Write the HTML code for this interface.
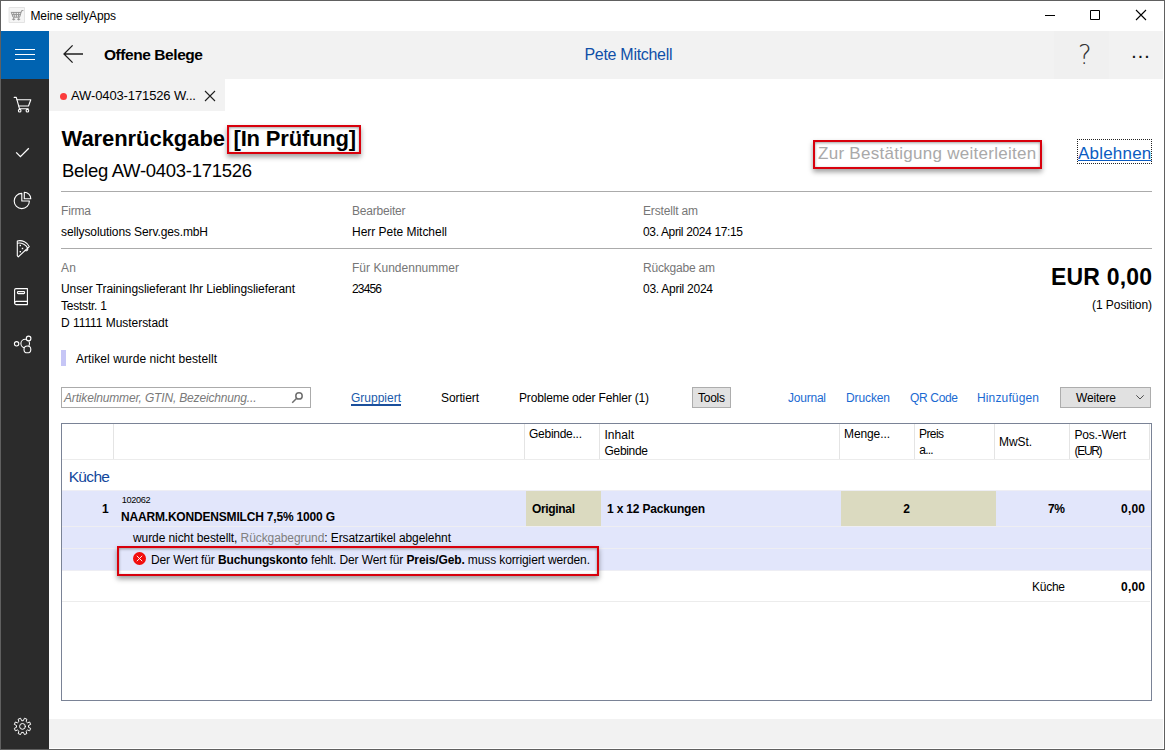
<!DOCTYPE html>
<html lang="de">
<head>
<meta charset="utf-8">
<title>Meine sellyApps</title>
<style>
html,body{margin:0;padding:0;}
body{width:1165px;height:750px;overflow:hidden;background:#fff;position:relative;font-family:"Liberation Sans",sans-serif;color:#000;}
.a{position:absolute;}
.t{position:absolute;white-space:nowrap;}
.ln{position:absolute;height:1px;background:#ababab;left:61px;width:1091px;}
.rb{position:absolute;border:2px solid #d8000c;box-shadow:0 3px 5px rgba(0,0,0,.38), inset 0 1px 3px rgba(0,0,0,.38);box-sizing:border-box;z-index:20;}
svg{position:absolute;overflow:visible;}
</style>
</head>
<body>
<!-- window frame -->
<div class="a" style="left:0;top:0;width:1165px;height:750px;box-sizing:border-box;border:1px solid #606060;z-index:50;pointer-events:none;"></div>

<!-- header bar -->
<div class="a" style="left:49px;top:31px;width:1114px;height:48px;background:#f2f2f2;"></div>
<div class="a" style="left:1054px;top:31px;width:55px;height:48px;background:#f0f0f0;"></div>
<!-- hamburger -->
<div class="a" style="left:1px;top:31px;width:48px;height:48px;background:#0063b1;"></div>
<div class="a" style="left:15px;top:49px;width:20px;height:1px;background:#fff;"></div>
<div class="a" style="left:15px;top:54px;width:20px;height:1px;background:#fff;"></div>
<div class="a" style="left:15px;top:59px;width:20px;height:1px;background:#fff;"></div>
<!-- sidebar -->
<div class="a" style="left:1px;top:79px;width:48px;height:670px;background:#2b2b2b;"></div>
<!-- tab -->
<div class="a" style="left:49px;top:79px;width:176px;height:32px;background:#f2f2f2;"></div>
<div class="a" style="left:60px;top:92.5px;width:7px;height:7px;border-radius:3.5px;background:#fb3b3b;"></div>
<!-- bottom bar -->
<div class="a" style="left:49px;top:719px;width:1114px;height:29px;background:#f2f2f2;"></div>

<!-- separator lines -->
<div class="ln" style="top:191px;"></div>
<div class="ln" style="top:248px;"></div>

<!-- red highlight boxes -->
<div class="rb" style="left:227px;top:125px;width:134px;height:29px;"></div>
<div class="rb" style="left:813px;top:140px;width:229px;height:29px;"></div>

<!-- dotted focus -->
<div class="a" style="left:1077px;top:139px;width:75px;height:25px;box-sizing:border-box;border:1px dotted #222;"></div>

<!-- lavender marker -->
<div class="a" style="left:61px;top:350px;width:5px;height:16px;background:#c6c6f6;"></div>

<!-- search box -->
<div class="a" style="left:61px;top:387px;width:250px;height:21px;box-sizing:border-box;border:1px solid #ababab;background:#fff;"></div>
<!-- gruppiert underline -->
<div class="a" style="left:351px;top:404px;width:50px;height:2px;background:#1b4f9c;"></div>
<!-- tools button -->
<div class="a" style="left:692px;top:387px;width:39px;height:21px;box-sizing:border-box;border:1px solid #adadad;background:#e1e1e1;"></div>
<!-- weitere button -->
<div class="a" style="left:1060px;top:387px;width:91px;height:21px;box-sizing:border-box;border:1px solid #adadad;background:#e1e1e1;"></div>

<!-- table -->
<div class="a" style="left:61px;top:423px;width:1091px;height:278px;box-sizing:border-box;border:1px solid #7a8396;background:#fff;"></div>
<!-- header bottom line -->
<div class="a" style="left:62px;top:459px;width:1088px;height:1px;background:#ececec;"></div>
<!-- header col separators -->
<div class="a" style="left:113px;top:424px;width:1px;height:35px;background:#e4e4e4;"></div>
<div class="a" style="left:524px;top:424px;width:1px;height:35px;background:#e4e4e4;"></div>
<div class="a" style="left:599px;top:424px;width:1px;height:35px;background:#e4e4e4;"></div>
<div class="a" style="left:839px;top:424px;width:1px;height:35px;background:#e4e4e4;"></div>
<div class="a" style="left:914px;top:424px;width:1px;height:35px;background:#e4e4e4;"></div>
<div class="a" style="left:994px;top:424px;width:1px;height:35px;background:#e4e4e4;"></div>
<div class="a" style="left:1069px;top:424px;width:1px;height:35px;background:#e4e4e4;"></div>
<div class="a" style="left:1149px;top:424px;width:1px;height:35px;background:#e4e4e4;"></div>
<!-- rows -->
<div class="a" style="left:62px;top:490px;width:1089px;height:80px;background:#e2e6fb;"></div>
<div class="a" style="left:62px;top:526px;width:1089px;height:1px;background:#eeeef2;"></div>
<div class="a" style="left:62px;top:548px;width:1089px;height:1px;background:#eeeef2;"></div>
<div class="a" style="left:62px;top:490px;width:1089px;height:1px;background:#eeeef4;"></div>
<div class="a" style="left:62px;top:570px;width:1089px;height:1px;background:#eeeef4;"></div>
<div class="a" style="left:526px;top:491px;width:75px;height:35px;background:#dbdac0;"></div>
<div class="a" style="left:841px;top:491px;width:155px;height:35px;background:#dbdac0;"></div>
<div class="a" style="left:62px;top:601px;width:1088px;height:1px;background:#ececec;"></div>

<!-- red box 3 -->
<div class="rb" style="left:117px;top:546px;width:482px;height:30px;"></div>


<svg width="1165" height="750" viewBox="0 0 1165 750" style="left:0;top:0;" fill="none" stroke-linecap="round" stroke-linejoin="round">
<!-- title icon -->
<rect x="9.5" y="7.5" width="15" height="15" fill="#f5f5f5" stroke="#e3e3e3" stroke-width="1"/>
<g stroke="#939393" stroke-width="1">
<path d="M11.3,12.3 L13,17.2 H19.6 L21.6,10.6 H23"/>
<path d="M13.6,12.5 L14.4,16.5 M16.2,12.5 L16.4,16.5 M18.8,12.5 L18.4,16.5 M11.8,12.4 H20.6 M12.4,14.6 H20"/>
<path d="M12.6,19.3 H14.8 M17.6,19.3 H19.8 M13.7,18 V20 M18.7,18 V20"/>
</g>
<!-- window controls -->
<g stroke="#000" stroke-width="1" stroke-linecap="butt">
<path d="M1045,15.5 H1055"/>
<rect x="1090.5" y="10.5" width="9" height="9"/>
<path d="M1136,10 L1146,20 M1146,10 L1136,20" stroke-width="1.1"/>
</g>
<!-- back arrow -->
<path d="M83,54 H64.2 M72.6,45.4 L64,54 L72.6,62.6" stroke="#1f1f1f" stroke-width="1.3" stroke-linecap="butt" stroke-linejoin="miter"/>
<!-- tab close -->
<path d="M205,91 L215,101 M215,91 L205,101" stroke="#1f1f1f" stroke-width="1.1" stroke-linecap="butt"/>
<!-- sidebar: cart -->
<g stroke="#fff" stroke-width="1.1">
<path d="M14.2,97.4 H16.3 L19.5,108.8 H28.2"/>
<path d="M16.9,99.7 H30.8 L28.5,106 H18.8"/>
<circle cx="19.7" cy="110.7" r="1.3"/><circle cx="27.4" cy="110.7" r="1.3"/>
<!-- check -->
<path d="M16.2,152.4 L20.4,156.6 L28.8,148.2" stroke-width="1.3" stroke-linecap="butt" stroke-linejoin="miter"/>
<!-- pie -->
<path d="M21.8,193.4 A7.6,7.6 0 1 0 29.4,201 H21.8 Z"/>
<path d="M24.3,192.3 A6.5,6.5 0 0 1 30.8,198.8 H24.3 Z"/>
<!-- pizza -->
<path d="M17.3,241 C22,239.6 27.6,242.4 29.3,246.6 L18.3,256.8 L17.3,255.6 Z"/>
<path d="M17.5,243.2 C21.5,242.4 25.8,244.6 27.6,248"/>
<path d="M25.2,250.4 A1.6,1.6 0 0 0 27.6,248.4"/>
<!-- book -->
<path d="M27.4,288.6 H16 A1.4,1.4 0 0 0 14.6,290 V303 A1.6,1.6 0 0 0 16.2,304.6 H27.4 Z"/>
<path d="M14.6,303 A1.6,1.6 0 0 1 16.2,301.4 H27.4"/>
<rect x="17.4" y="291.6" width="7.2" height="2" rx="0.8"/>
<!-- molecule -->
<circle cx="25.2" cy="343.6" r="4.3"/>
<circle cx="16.6" cy="343.8" r="2.2"/>
<circle cx="28.6" cy="338.4" r="2.3" fill="#2b2b2b"/>
<circle cx="27.4" cy="349.4" r="3.4" fill="#2b2b2b"/>
<!-- gear -->
<path d="M23.45,720.38 L24.46,718.23 L26.89,719.24 L26.09,721.46 L27.44,722.81 L29.66,722.01 L30.67,724.44 L28.52,725.45 L28.52,727.35 L30.67,728.36 L29.66,730.79 L27.44,729.99 L26.09,731.34 L26.89,733.56 L24.46,734.57 L23.45,732.42 L21.55,732.42 L20.54,734.57 L18.11,733.56 L18.91,731.34 L17.56,729.99 L15.34,730.79 L14.33,728.36 L16.48,727.35 L16.48,725.45 L14.33,724.44 L15.34,722.01 L17.56,722.81 L18.91,721.46 L18.11,719.24 L20.54,718.23 L21.55,720.38Z" stroke-width="1"/>
<circle cx="22.5" cy="726.4" r="2.9" stroke-width="1"/>
</g>
<g fill="#fff" stroke="none"><rect x="19.6" y="244.8" width="1.4" height="1.4"/><rect x="21.8" y="247.8" width="1.4" height="1.4"/><rect x="19.6" y="251" width="1.4" height="1.4"/></g>
<!-- search icon -->
<g stroke="#6e6e6e" stroke-width="1.5" stroke-linecap="butt"><circle cx="299" cy="395.9" r="3.2"/><path d="M296.7,398.3 L292.2,402.7"/></g>
<!-- chevron weitere -->
<path d="M1136.3,395.3 L1140,399 L1143.7,395.3" stroke="#505050" stroke-width="1" stroke-linecap="butt" stroke-linejoin="miter"/>
<!-- error icon -->
<circle cx="139.5" cy="558.5" r="6.5" fill="#f20d0d"/>
<path d="M136.8,555.8 L142.2,561.2 M142.2,555.8 L136.8,561.2" stroke="#fff" stroke-width="0.9" stroke-linecap="butt"/>
</svg>

<span class="t" id="help" style="left:1077.6px;top:39px;font-family:'DejaVu Sans Light','DejaVu Sans',sans-serif;font-weight:200;font-size:27px;line-height:32px;color:#333;transform:scaleX(.95);transform-origin:left top;">?</span>
<span class="t" id="more" style="left:1132px;top:43px;font-size:14px;line-height:20px;color:#111;letter-spacing:2.6px;font-weight:700;">...</span>
<span class="t" id="tt" style="font-size:12px;line-height:16px;top:7.84px;left:30.5px;letter-spacing:-0.134px;">Meine sellyApps</span>
<span class="t" id="ob" style="font-size:15.5px;line-height:20px;top:44.63px;left:104px;font-weight:700;letter-spacing:-0.436px;">Offene Belege</span>
<span class="t" id="pm" style="font-size:16px;line-height:21px;top:43.96px;left:584.5px;color:#0f4fa8;letter-spacing:-0.299px;">Pete Mitchell</span>
<span class="t" id="tab" style="font-size:13px;line-height:17px;top:87.00px;left:71px;letter-spacing:-0.122px;">AW-0403-171526 W...</span>
<span class="t" id="h1" style="font-size:22px;line-height:29px;top:123.88px;left:61.5px;font-weight:700;letter-spacing:-0.062px;">Warenrückgabe</span>
<span class="t" id="h1b" style="font-size:22px;line-height:29px;top:123.88px;left:233.5px;font-weight:700;letter-spacing:-0.176px;">[In Prüfung]</span>
<span class="t" id="h2" style="font-size:18.5px;line-height:24px;top:159.29px;left:62px;letter-spacing:-0.286px;">Beleg AW-0403-171526</span>
<span class="t" id="zb" style="font-size:17px;line-height:22px;top:143.41px;left:818px;color:#a9a9a9;letter-spacing:0.280px;">Zur Bestätigung weiterleiten</span>
<span class="t" id="ab" style="font-size:17px;line-height:22px;top:143.41px;left:1078px;color:#0a5cc2;letter-spacing:0.208px;text-decoration:underline;text-decoration-thickness:1px;text-underline-offset:1px;">Ablehnen</span>
<span class="t" id="l1" style="font-size:12px;line-height:16px;top:202.84px;left:61px;color:#767676;letter-spacing:-0.168px;">Firma</span>
<span class="t" id="l2" style="font-size:12px;line-height:16px;top:202.84px;left:352px;color:#767676;letter-spacing:-0.208px;">Bearbeiter</span>
<span class="t" id="l3" style="font-size:12px;line-height:16px;top:202.84px;left:643px;color:#767676;letter-spacing:-0.169px;">Erstellt am</span>
<span class="t" id="v1" style="font-size:12px;line-height:16px;top:223.84px;left:61px;letter-spacing:-0.109px;">sellysolutions Serv.ges.mbH</span>
<span class="t" id="v2" style="font-size:12px;line-height:16px;top:223.84px;left:352px;letter-spacing:-0.022px;">Herr Pete Mitchell</span>
<span class="t" id="v3" style="font-size:12px;line-height:16px;top:223.84px;left:643px;letter-spacing:-0.356px;">03. April 2024 17:15</span>
<span class="t" id="l4" style="font-size:12px;line-height:16px;top:259.84px;left:61px;color:#767676;letter-spacing:0.312px;">An</span>
<span class="t" id="l5" style="font-size:12px;line-height:16px;top:259.84px;left:352px;color:#767676;letter-spacing:0.019px;">Für Kundennummer</span>
<span class="t" id="l6" style="font-size:12px;line-height:16px;top:259.84px;left:643px;color:#767676;letter-spacing:-0.205px;">Rückgabe am</span>
<span class="t" id="v4" style="font-size:12px;line-height:16px;top:280.84px;left:61px;letter-spacing:-0.075px;">Unser Trainingslieferant Ihr Lieblingslieferant</span>
<span class="t" id="v4b" style="font-size:12px;line-height:16px;top:297.84px;left:61px;letter-spacing:-0.226px;">Teststr. 1</span>
<span class="t" id="v4c" style="font-size:12px;line-height:16px;top:314.84px;left:61px;letter-spacing:-0.047px;">D 11111 Musterstadt</span>
<span class="t" id="v5" style="font-size:12px;line-height:16px;top:280.84px;left:352px;letter-spacing:-0.844px;">23456</span>
<span class="t" id="v6" style="font-size:12px;line-height:16px;top:280.84px;left:643px;letter-spacing:-0.261px;">03. April 2024</span>
<span class="t" id="eur" style="font-size:23px;line-height:30px;top:261.73px;right:12.82px;font-weight:700;letter-spacing:0.183px;">EUR 0,00</span>
<span class="t" id="pos" style="font-size:12px;line-height:16px;top:296.84px;right:13.06px;letter-spacing:-0.064px;">(1 Position)</span>
<span class="t" id="anb" style="font-size:12px;line-height:16px;top:350.84px;left:76px;letter-spacing:0.059px;">Artikel wurde nicht bestellt</span>
<span class="t" id="ph" style="font-size:12px;line-height:16px;top:389.84px;left:64px;color:#7a7a7a;letter-spacing:-0.164px;font-style:italic;">Artikelnummer, GTIN, Bezeichnung...</span>
<span class="t" id="gr" style="font-size:12px;line-height:16px;top:389.84px;left:351px;color:#1b5bab;letter-spacing:-0.004px;">Gruppiert</span>
<span class="t" id="so" style="font-size:12px;line-height:16px;top:389.84px;left:441px;letter-spacing:-0.098px;">Sortiert</span>
<span class="t" id="pf" style="font-size:12px;line-height:16px;top:389.84px;left:519px;letter-spacing:-0.177px;">Probleme oder Fehler (1)</span>
<span class="t" id="to" style="font-size:12px;line-height:16px;top:389.84px;left:698px;letter-spacing:-0.254px;">Tools</span>
<span class="t" id="jo" style="font-size:12px;line-height:16px;top:389.84px;left:788px;color:#1a6ad2;letter-spacing:-0.227px;">Journal</span>
<span class="t" id="dr" style="font-size:12px;line-height:16px;top:389.84px;left:846px;color:#1a6ad2;letter-spacing:-0.115px;">Drucken</span>
<span class="t" id="qr" style="font-size:12px;line-height:16px;top:389.84px;left:910px;color:#1a6ad2;letter-spacing:-0.339px;">QR Code</span>
<span class="t" id="hi" style="font-size:12px;line-height:16px;top:389.84px;left:977px;color:#1a6ad2;letter-spacing:0.142px;">Hinzufügen</span>
<span class="t" id="we" style="font-size:12px;line-height:16px;top:389.84px;left:1076px;letter-spacing:-0.190px;">Weitere</span>
<span class="t" id="c1" style="font-size:12px;line-height:16px;top:425.84px;left:529px;letter-spacing:-0.264px;">Gebinde...</span>
<span class="t" id="c2a" style="font-size:12px;line-height:16px;top:426.84px;left:604.5px;letter-spacing:0.028px;">Inhalt</span>
<span class="t" id="c2b" style="font-size:12px;line-height:16px;top:442.84px;left:604.5px;letter-spacing:-0.312px;">Gebinde</span>
<span class="t" id="c3" style="font-size:12px;line-height:16px;top:425.84px;left:844px;letter-spacing:-0.100px;">Menge...</span>
<span class="t" id="c4a" style="font-size:12px;line-height:16px;top:425.84px;left:919px;letter-spacing:-0.586px;">Preis</span>
<span class="t" id="c4b" style="font-size:12px;line-height:16px;top:441.84px;left:919.3px;letter-spacing:-0.762px;">a...</span>
<span class="t" id="c5" style="font-size:12px;line-height:16px;top:433.84px;left:999px;letter-spacing:-0.086px;">MwSt.</span>
<span class="t" id="c6a" style="font-size:12px;line-height:16px;top:426.84px;left:1074.4px;letter-spacing:-0.191px;">Pos.-Wert</span>
<span class="t" id="c6b" style="font-size:12px;line-height:16px;top:442.84px;left:1074.6px;letter-spacing:-1.357px;">(EUR)</span>
<span class="t" id="ku" style="font-size:15.5px;line-height:20px;top:466.63px;left:68.7px;color:#12479c;letter-spacing:-0.663px;">Küche</span>
<span class="t" id="n1" style="font-size:12px;line-height:16px;top:500.84px;left:102px;font-weight:700;">1</span>
<span class="t" id="an" style="font-size:9.2px;line-height:12px;top:493.81px;left:121.8px;letter-spacing:-0.354px;">102062</span>
<span class="t" id="nm" style="font-size:12px;line-height:16px;top:508.84px;left:121px;font-weight:700;letter-spacing:-0.185px;">NAARM.KONDENSMILCH 7,5% 1000 G</span>
<span class="t" id="or" style="font-size:12px;line-height:16px;top:500.84px;left:532px;font-weight:700;letter-spacing:-0.335px;">Original</span>
<span class="t" id="pk" style="font-size:12px;line-height:16px;top:500.84px;left:607px;font-weight:700;letter-spacing:-0.181px;">1 x 12 Packungen</span>
<span class="t" id="q2" style="font-size:12px;line-height:16px;top:500.84px;right:255.00px;font-weight:700;">2</span>
<span class="t" id="mw" style="font-size:12px;line-height:16px;top:500.84px;right:100.34px;font-weight:700;letter-spacing:-0.344px;">7%</span>
<span class="t" id="pw" style="font-size:12px;line-height:16px;top:500.84px;right:19.79px;font-weight:700;letter-spacing:0.214px;">0,00</span>
<span class="t" id="wn" style="font-size:12px;line-height:16px;top:529.84px;left:133px;letter-spacing:-0.083px;">wurde nicht bestellt, <span style="color:#808080">Rückgabegrund</span>: Ersatzartikel abgelehnt</span>
<span class="t" id="er" style="font-size:12px;line-height:16px;top:551.84px;left:151px;letter-spacing:-0.117px;">Der Wert für <b>Buchungskonto</b> fehlt. Der Wert für <b>Preis/Geb.</b> muss korrigiert werden.</span>
<span class="t" id="ks" style="font-size:12px;line-height:16px;top:578.84px;right:100.26px;letter-spacing:-0.258px;">Küche</span>
<span class="t" id="kv" style="font-size:12px;line-height:16px;top:578.84px;right:19.79px;font-weight:700;letter-spacing:0.214px;">0,00</span>
</body>
</html>
